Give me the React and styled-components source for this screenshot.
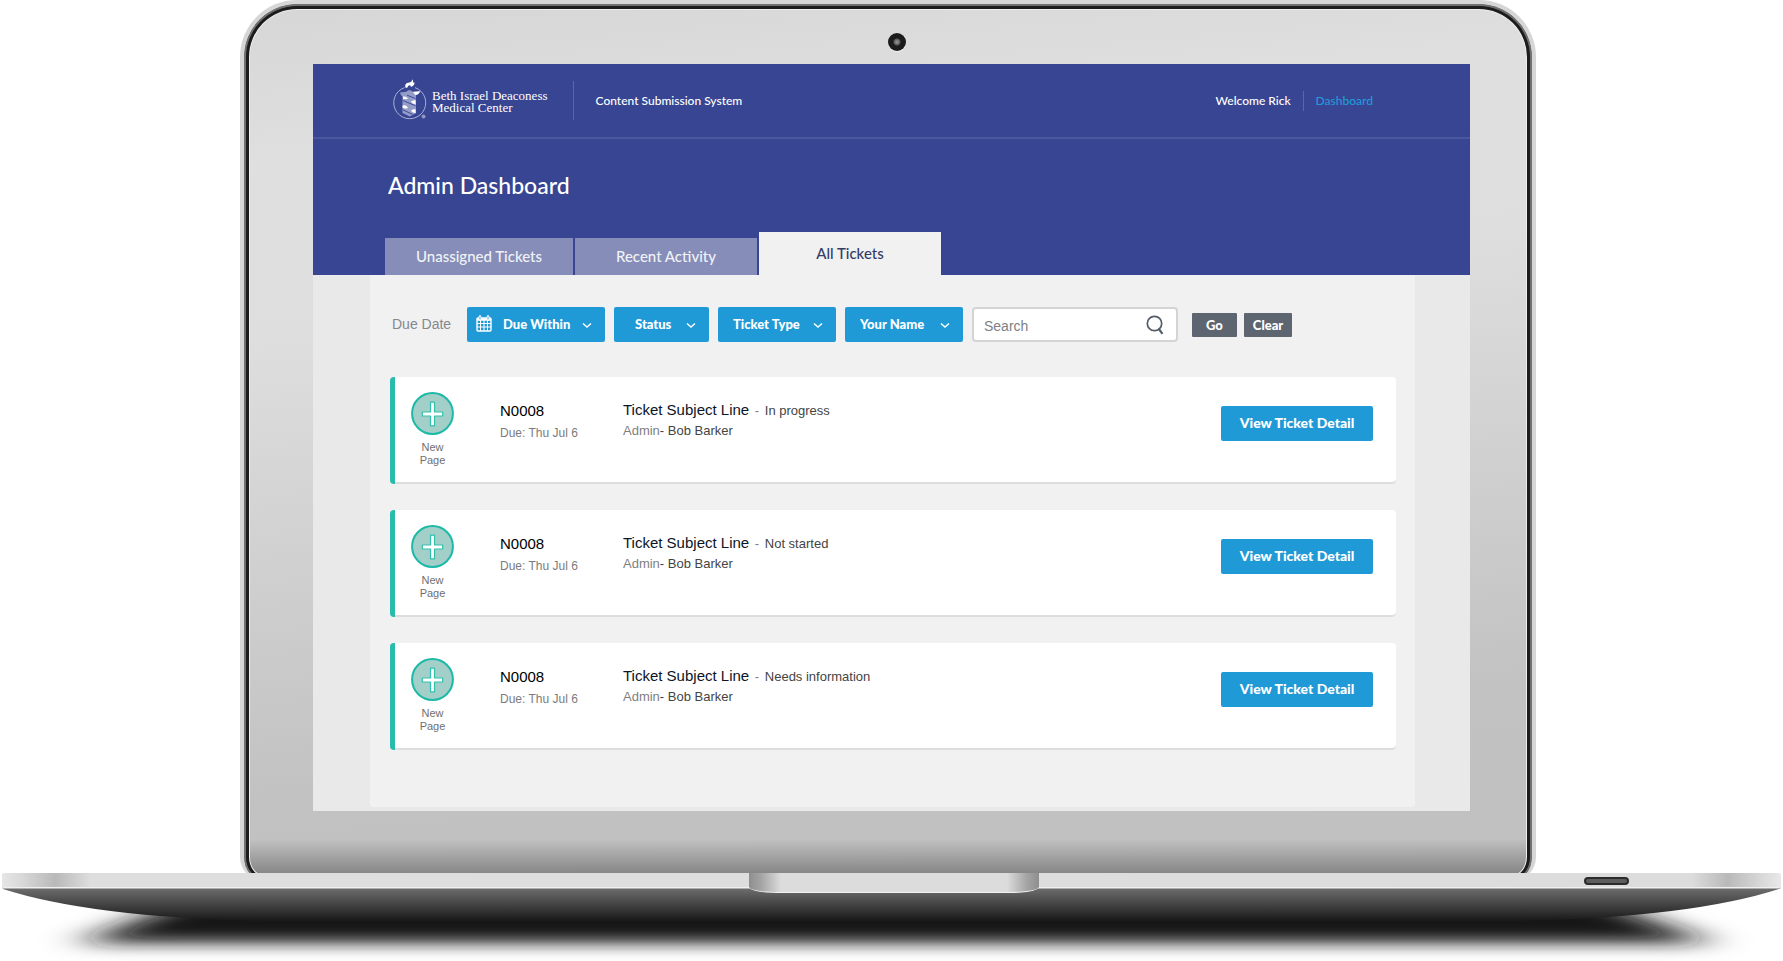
import React, { useState } from 'react';
import styled, { createGlobalStyle } from 'styled-components';

const GlobalStyle = createGlobalStyle`
  * {
    box-sizing: border-box;
  }

  body {
    margin: 0;
    background: #fff;
    font-family: "Liberation Sans", Arial, sans-serif;
  }

  button, input, select {
    margin: 0;
    font-family: inherit;
  }
`;

const HEADING_FONT = 'Lato, "Century Gothic", sans-serif';

/* ---------- laptop ---------- */

const Laptop = styled.div`
  width: 100%;
  min-width: 1400px;
`;

const Lid = styled.div`
  margin: 0 247px -8px 240px;
  padding: 0 62px 70px 69px;
  border: 4px solid #d6d6d6;
  border-bottom-width: 0;
  border-radius: 57px 57px 24px 24px;
  background:
    linear-gradient(0deg, rgba(0, 0, 0, 0.3) 8px, rgba(0, 0, 0, 0) 42px),
    linear-gradient(175deg, #d6d6d6 0%, #dfdfdf 16%, #dedede 34%, #c2c2c2 80%, #c0c0c0 100%);
  background-clip: padding-box;
  box-shadow: inset 0 0 0 2px #6f716f, inset 0 0 0 5px #1b1c1b, inset 0 0 0 6px #ededed;
`;

const CameraBar = styled.div`
  display: flex;
  justify-content: center;
  height: 60px;
  padding: 29px 0 0 10px;
`;

const Camera = styled.span`
  width: 18px;
  height: 18px;
  border-radius: 50%;
  background: radial-gradient(circle, #8a8a8a 0 1px, #585858 3px, #1c1c1c 4px);
  box-shadow: 0 1px 0 #f4f4f4;
`;

const Base = styled.div`
  position: relative;
`;

const Slab = styled.div`
  display: flex;
  justify-content: flex-end;
  align-items: center;
  height: 16px;
  margin: 0 2px;
  padding-right: 152px;
  border-bottom: 1px solid #a9aeab;
  border-radius: 2px;
  background: linear-gradient(90deg, #e6e6e6, #dadada 1%, #b9b9b9 3%, #dedede 5%, #dcdcdc 95%, #b9b9b9 97%, #dadada 99%, #e8e8e8);
  box-shadow: inset 0 -1px 0 #eef1f0;
`;

const Port = styled.span`
  width: 45px;
  height: 8px;
  border: 2px solid #2b2b2b;
  border-radius: 4px;
  background: #5d5d5d;
`;

const Notch = styled.span`
  position: absolute;
  top: 0;
  left: 42%;
  width: 290px;
  height: 20px;
  border-bottom: 1px solid #f2f2f2;
  border-radius: 0 0 28px 28px / 0 0 6px 6px;
  background: linear-gradient(90deg, #8e8e8e, #a4a4a4 12px, #dcdcdc 32px, #dcdcdc 258px, #a4a4a4 278px, #8e8e8e);
`;

const Underside = styled.svg`
  display: block;
  width: 100%;
  height: 72px;
`;

/* ---------- screen ---------- */

const Screen = styled.div`
  background: #e9e9e9;
  padding-bottom: 4px;
`;

const Header = styled.header`
  background: #374593;
  color: #fff;
  font-family: ${HEADING_FONT};
`;

const TopBar = styled.div`
  display: flex;
  align-items: center;
  height: 75px;
  padding: 0 97px 0 80px;
  border-bottom: 2px solid #4b579d;
`;

const Brand = styled.a`
  display: flex;
  align-items: center;
  gap: 5px;
  padding-bottom: 2px;
  color: #fff;
  font: 13px/12px "Liberation Serif", "Times New Roman", serif;
  text-decoration: none;

  span {
    padding-top: 4px;
  }
`;

const Divider = styled.span`
  width: 1px;
  height: 20px;
  background: #5a66a6;
`;

const BrandDivider = styled(Divider)`
  height: 39px;
  margin-left: 25px;
`;

const SystemName = styled.span`
  flex: 1;
  margin-left: 22px;
  font-size: 12px;
  font-weight: 500;
`;

const UserNav = styled.nav`
  display: flex;
  align-items: center;
  gap: 12px;
  font-size: 12px;
  font-weight: 500;

  a {
    color: #239bd8;
    text-decoration: none;
  }
`;

const Title = styled.h1`
  margin: 0;
  padding: 31px 0 32px 75px;
  font-size: 23px;
  line-height: 30px;
  font-weight: 500;
`;

const Tabs = styled.div`
  display: flex;
  align-items: flex-end;
  gap: 2px;
  padding-left: 72px;
`;

const Tab = styled.button`
  width: ${(p) => p.$width}px;
  height: ${(p) => (p.$active ? 43 : 37)}px;
  padding: 0 0 2px;
  border: 0;
  background: ${(p) => (p.$active ? '#f1f1f1' : '#858db8')};
  color: ${(p) => (p.$active ? '#343c66' : '#f1f2f7')};
  font: 500 15px ${HEADING_FONT};
  cursor: pointer;
`;

const Panel = styled.main`
  margin: 0 55px 0 57px;
  padding: 32px 19px 57px 20px;
  border-radius: 0 0 4px 4px;
  background: #f1f1f1;
`;

/* ---------- filters ---------- */

const Filters = styled.form`
  display: flex;
  align-items: center;
  gap: 9px;
  margin-bottom: 35px;
`;

const FilterLabel = styled.label`
  width: 68px;
  padding: 0 0 2px 2px;
  color: #85888e;
  font-size: 14px;
`;

const SelectBox = styled.div`
  position: relative;
  width: ${(p) => p.$width}px;
  height: 35px;

  select {
    width: 100%;
    height: 100%;
    padding: 0 26px 2px ${(p) => p.$indent}px;
    border: 0;
    border-radius: 2px;
    background: #1f9ad7;
    color: #fff;
    font: 900 13px ${HEADING_FONT};
    appearance: none;
    cursor: pointer;
  }

  svg {
    position: absolute;
    pointer-events: none;
  }
`;

const SearchBox = styled.div`
  display: flex;
  align-items: center;
  width: 206px;
  height: 35px;
  padding: 0 12px 0 10px;
  border: 2px solid #d4d4d4;
  border-radius: 4px;
  background: #fff;

  input {
    flex: 1;
    min-width: 0;
    padding: 3px 0 0;
    border: 0;
    outline: 0;
    background: none;
    color: #333;
    font-size: 14px;
  }

  input::placeholder {
    color: #7d8086;
    opacity: 1;
  }
`;

const Actions = styled.div`
  display: flex;
  gap: 7px;
  margin-left: 5px;
`;

const SmallButton = styled.button`
  height: 24px;
  padding: 0 ${(p) => p.$pad}px;
  border: 0;
  border-radius: 1px;
  background: #5d6670;
  color: #fff;
  font: 900 13px ${HEADING_FONT};
  cursor: pointer;
`;

/* ---------- tickets ---------- */

const TicketList = styled.ul`
  display: flex;
  flex-direction: column;
  gap: 26px;
  margin: 0;
  padding: 0;
  list-style: none;
`;

const TicketCard = styled.li`
  display: flex;
  align-items: flex-start;
  min-height: 107px;
  padding-right: 23px;
  border-left: 5px solid #29bbab;
  border-radius: 4px;
  background: #fff;
  box-shadow: inset 0 -2px 0 #dddddd;
`;

const TicketKind = styled.div`
  display: flex;
  flex-direction: column;
  align-items: center;
  width: 75px;
  padding-top: 15px;
  color: #6f6f6f;
  font-size: 11px;
  line-height: 13px;
  text-align: center;

  svg {
    margin-bottom: 6px;
  }

  span {
    width: 30px;
  }
`;

const TicketMeta = styled.div`
  width: 152px;
  padding: 23px 0 0 30px;
  line-height: 22px;
`;

const TicketNumber = styled.div`
  color: #000;
  font-size: 15px;
`;

const DueDate = styled.div`
  color: #7c7c7c;
  font-size: 12px;
`;

const TicketBody = styled.div`
  flex: 1;
  padding: 23px 0 0 1px;
  color: #444;
  font-size: 13px;
  line-height: 20px;
`;

const Subject = styled.h2`
  display: inline;
  margin: 0 2px 0 0;
  color: #0c1526;
  font-size: 15px;
  font-weight: 400;
`;

const Muted = styled.span`
  color: #808080;
`;

const Status = styled.span`
  margin-left: 2px;
`;

const DetailButton = styled.button`
  width: 152px;
  height: 35px;
  margin-top: 29px;
  padding: 0 0 2px;
  border: 0;
  border-radius: 2px;
  background: #1f9ad7;
  color: #fff;
  font: 900 14px ${HEADING_FONT};
  cursor: pointer;
`;

const IconSvg = styled.svg`
  display: block;
  flex: none;
`;

const Chevron = styled(IconSvg)`
  top: 15px;
  right: 13px;
`;

const CalendarSvg = styled(IconSvg)`
  top: 8px;
  left: 9px;
`;

const LogoIcon = () => (
  <IconSvg width="34" height="41" viewBox="0 0 34 41" fill="none" aria-hidden="true">
    <path d="M11.5 8.6a16 16 0 1 0 10.5 0" stroke="#a9b0d3" strokeWidth="1" />
    <path d="M12.6 8.8c-1.2-3 .6-5 3.6-5.2 1.7-.2 2.6-1.2 3.1-3.4.8 1.2 1 2.3.6 3.2l1.7.2c-.2 2.6-1.7 3.8-3.6 4.3-.2-1-.6-1.5-1.3-1.7-1.4.3-2.2 1.2-2.4 2.6z" fill="#fff" />
    <path d="M7 13.5l6.5-.8c1-2 5-2 6 0l7.5-.4c-1.2 2.3-2.6 3.4-4 3.6v18l-6.200 3.5-7.300-3.300V17.300c-1.300-.6-2-1.800-2.500-3.800z" fill="#949cc8" />
    <path d="M19.8 13l7.4-.7c-1 2.4-2.5 3.5-4.800 3.7zM9.800 17.800c2.500-.8 4 .3 5.200 2.200l-4.700.3zM18 22.500c1.500-.6 2-1.800 4.600-.9v3.800c-2-.3-3.600-1.200-4.600-2.900zM9.500 26.800c3-1.300 4.300.4 5.400 2.100-2 1-4 .8-5.400-.5zM18 31.500c1.500-.5 2.600-1.500 4.600-1v3.700c-2.200-.3-3.600-1.200-4.600-2.700z" fill="#fff" />
    <path d="M10 21.500l12.500 5.300M10 30.800l9.500 4.700M14 16.200l8.500 3.300" stroke="#374593" strokeWidth=".9" />
    <circle cx="30.5" cy="37.5" r="1.6" fill="#8991c0" stroke="#b5bbd9" strokeWidth=".6" />
  </IconSvg>
);

const ChevronIcon = () => (
  <Chevron width="10" height="7" viewBox="0 0 10 7" fill="none" aria-hidden="true">
    <path d="M1 1.5l4 3.5 4-3.5" stroke="#fff" strokeWidth="1.4" />
  </Chevron>
);

const CalendarIcon = () => (
  <CalendarSvg width="16" height="17" viewBox="0 0 16 17" fill="none" stroke="#fff" aria-hidden="true">
    <rect x="1" y="3" width="14" height="13" rx="1" strokeWidth="1.4" />
    <path d="M1 4.5h14" strokeWidth="2.5" />
    <path d="M4.5 5v11M8 5v11M11.5 5v11M1 8.5h14M1 12h14" strokeWidth="1" />
    <path d="M4 1.500v3M12 1.500v3" strokeWidth="2.6" strokeLinecap="round" />
    <path d="M4 1.500v3M12 1.500v3" stroke="#1f9ad7" strokeWidth=".8" />
  </CalendarSvg>
);

const SearchIcon = () => (
  <IconSvg width="18" height="20" viewBox="0 0 18 20" fill="none" stroke="#535c67" aria-hidden="true">
    <circle cx="8.5" cy="8.5" r="7.2" strokeWidth="1.7" />
    <path d="M12.500 13.500l4 5.300" strokeWidth="2.2" />
  </IconSvg>
);

const NewPageIcon = () => (
  <IconSvg width="43" height="43" viewBox="0 0 43 43" aria-hidden="true">
    <circle cx="21.5" cy="21.5" r="20.4" fill="#a3cfc9" stroke="#1bb9a7" strokeWidth="2" />
    <path
      d="M19.5 10.200h4v9.800h8.200v4h-8.200v9.800h-4V24h-8.200v-4h8.200z"
      fill="#fff"
      stroke="#32bfae"
      strokeWidth="1.2"
      strokeLinejoin="round"
    />
  </IconSvg>
);

const tabs = [
  { name: 'Unassigned Tickets', width: 188 },
  { name: 'Recent Activity', width: 182 },
  { name: 'All Tickets', width: 182 },
];

const filters = [
  { id: 'status', name: 'Status', width: 95, indent: 21 },
  { id: 'type', name: 'Ticket Type', width: 118, indent: 15 },
  { id: 'name', name: 'Your Name', width: 118, indent: 15 },
];

const tickets = [
  { id: 1, number: 'N0008', due: 'Thu Jul 6', subject: 'Ticket Subject Line', status: 'In progress', admin: 'Bob Barker' },
  { id: 2, number: 'N0008', due: 'Thu Jul 6', subject: 'Ticket Subject Line', status: 'Not started', admin: 'Bob Barker' },
  { id: 3, number: 'N0008', due: 'Thu Jul 6', subject: 'Ticket Subject Line', status: 'Needs information', admin: 'Bob Barker' },
];

const Ticket = ({ ticket }) => (
  <TicketCard>
    <TicketKind>
      <NewPageIcon />
      <span>New Page</span>
    </TicketKind>
    <TicketMeta>
      <TicketNumber>{ticket.number}</TicketNumber>
      <DueDate>Due: {ticket.due}</DueDate>
    </TicketMeta>
    <TicketBody>
      <div>
        <Subject>{ticket.subject}</Subject> <Muted>-</Muted> <Status>{ticket.status}</Status>
      </div>
      <div>
        <Muted>Admin</Muted>- {ticket.admin}
      </div>
    </TicketBody>
    <DetailButton type="button">View Ticket Detail</DetailButton>
  </TicketCard>
);

const Dashboard = () => {
  const [activeTab, setActiveTab] = useState('All Tickets');
  const [search, setSearch] = useState('');

  return (
    <Screen>
      <Header>
        <TopBar>
          <Brand href="#home">
            <LogoIcon />
            <span>
              Beth Israel Deaconess
              <br />
              Medical Center
            </span>
          </Brand>
          <BrandDivider />
          <SystemName>Content Submission System</SystemName>
          <UserNav>
            <span>Welcome Rick</span>
            <Divider />
            <a href="#dashboard">Dashboard</a>
          </UserNav>
        </TopBar>
        <Title>Admin Dashboard</Title>
        <Tabs role="tablist">
          {tabs.map((tab) => (
            <Tab
              key={tab.name}
              type="button"
              role="tab"
              aria-selected={activeTab === tab.name}
              $active={activeTab === tab.name}
              $width={tab.width}
              onClick={() => setActiveTab(tab.name)}
            >
              {tab.name}
            </Tab>
          ))}
        </Tabs>
      </Header>
      <Panel>
        <Filters onSubmit={(e) => e.preventDefault()}>
          <FilterLabel htmlFor="due">Due Date</FilterLabel>
          <SelectBox $width={138} $indent={36}>
            <CalendarIcon />
            <select id="due" defaultValue="Due Within">
              <option>Due Within</option>
            </select>
            <ChevronIcon />
          </SelectBox>
          {filters.map((filter) => (
            <SelectBox key={filter.id} $width={filter.width} $indent={filter.indent}>
              <select id={filter.id} aria-label={filter.name} defaultValue={filter.name}>
                <option>{filter.name}</option>
              </select>
              <ChevronIcon />
            </SelectBox>
          ))}
          <SearchBox>
            <input
              type="text"
              aria-label="Search"
              placeholder="Search"
              value={search}
              onChange={(e) => setSearch(e.target.value)}
            />
            <SearchIcon />
          </SearchBox>
          <Actions>
            <SmallButton type="submit" $pad={14}>Go</SmallButton>
            <SmallButton type="button" $pad={9} onClick={() => setSearch('')}>Clear</SmallButton>
          </Actions>
        </Filters>
        <TicketList>
          {tickets.map((ticket) => (
            <Ticket key={ticket.id} ticket={ticket} />
          ))}
        </TicketList>
      </Panel>
    </Screen>
  );
};

const App = () => (
  <>
    <GlobalStyle />
    <Laptop>
      <Lid>
        <CameraBar>
          <Camera />
        </CameraBar>
        <Dashboard />
      </Lid>
      <Base>
        <Slab>
          <Port />
        </Slab>
        <Underside viewBox="0 0 1783 72" preserveAspectRatio="none" aria-hidden="true">
          <defs>
            <linearGradient id="metal" x1="0" y1="0" x2="0" y2="1">
              <stop offset="0" stopColor="#6b6b6b" />
              <stop offset=".45" stopColor="#464646" />
              <stop offset="1" stopColor="#181818" />
            </linearGradient>
            <filter id="soft" x="-10%" y="-100%" width="120%" height="300%">
              <feGaussianBlur stdDeviation="22 8" />
            </filter>
          </defs>
          <path d="M190 10H1595L1714 54H78z" fill="#141414" filter="url(#soft)" />
          <path d="M3 0Q90 28 260 32H1522Q1692 28 1779 0z" fill="url(#metal)" />
        </Underside>
        <Notch />
      </Base>
    </Laptop>
  </>
);

export default App;
